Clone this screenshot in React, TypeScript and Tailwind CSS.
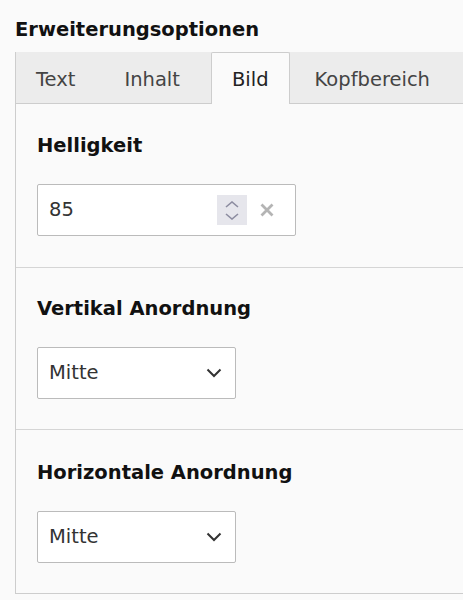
import React from "react";

const font = { fontFamily: '"DejaVu Sans", Verdana, sans-serif' };

const tabs = [
  { label: "Text", gap: "mr-[9px]" },
  { label: "Inhalt", gap: "mr-[11px]" },
  { label: "Bild", gap: "mr-[5px]" },
  { label: "Kopfbereich", gap: "mr-[5px]" },
];

const SelectChevron = () => (
  <svg width="16" height="10" viewBox="0 0 16 10" fill="none">
    <path d="M1.5 1.5 L8 8 L14.5 1.5" stroke="#333" strokeWidth="2" />
  </svg>
);

const Spinner = () => (
  <div className="w-[30px] h-[30px] bg-[#e6e6ec] flex flex-col items-center justify-center gap-[5px]">
    <svg width="14" height="7" viewBox="0 0 14 7" fill="none">
      <path d="M1 6 L7 1 L13 6" stroke="#8c8ca0" strokeWidth="1.6" />
    </svg>
    <svg width="14" height="7" viewBox="0 0 14 7" fill="none">
      <path d="M1 1 L7 6 L13 1" stroke="#8c8ca0" strokeWidth="1.6" />
    </svg>
  </div>
);

const ClearIcon = () => (
  <svg width="14" height="14" viewBox="0 0 14 14" fill="none">
    <path d="M1.5 1.5 L12.5 12.5 M12.5 1.5 L1.5 12.5" stroke="#b4b4b4" strokeWidth="2.8" />
  </svg>
);

function Select({ value }: { value: string }) {
  return (
    <div className="w-[199px] h-[52px] bg-white border border-[#bbbbbb] rounded-[2px] flex items-center pl-[11px] pr-[13px] text-[#333]">
      <span className="flex-1">{value}</span>
      <SelectChevron />
    </div>
  );
}

export default function App() {
  return (
    <div className="min-h-[600px] bg-[#fafafa] text-[19.5px] leading-[24px] pt-[18px] pl-[15px] overflow-hidden" style={font}>
      <h2 className="font-bold text-[#111] h-[24px]">Erweiterungsoptionen</h2>

      <div className="mt-[10px] w-[470px]">
        {/* tab bar */}
        <div className="flex h-[52px] bg-[#ececec] border-b border-[#cdcdcd] border-l">
          {tabs.map((t) => {
            const active = t.label === "Bild";
            return (
              <div
                key={t.label}
                className={
                  active
                    ? `h-[52px] px-[20px] pt-[15px] bg-[#fafafa] border border-b-0 border-[#cdcdcd] rounded-t-[2px] text-[#222] ${t.gap}`
                    : `h-[51px] px-[20px] pt-[16px] text-[#444] ${t.gap}`
                }
              >
                {t.label}
              </div>
            );
          })}
        </div>

        {/* panel */}
        <div className="border-l border-b border-[#cdcdcd]">
          <div className="pl-[21px] pt-[30px] pb-[31px] border-b border-[#d5d5d5]">
            <div className="font-bold text-[#111]">Helligkeit</div>
            <div className="mt-[26px] w-[259px] h-[52px] bg-white border border-[#bbbbbb] rounded-[2px] flex items-center pl-[11px] pr-[21px] text-[#333]">
              <span className="flex-1">85</span>
              <Spinner />
              <div className="ml-[13px] flex items-center">
                <ClearIcon />
              </div>
            </div>
          </div>

          <div className="pl-[21px] pt-[29px] pb-[30px] border-b border-[#d5d5d5]">
            <div className="font-bold text-[#111]">Vertikal Anordnung</div>
            <div className="mt-[26px]">
              <Select value="Mitte" />
            </div>
          </div>

          <div className="pl-[21px] pt-[31px] pb-[30px]">
            <div className="font-bold text-[#111]">Horizontale Anordnung</div>
            <div className="mt-[26px]">
              <Select value="Mitte" />
            </div>
          </div>
        </div>
      </div>
    </div>
  );
}
